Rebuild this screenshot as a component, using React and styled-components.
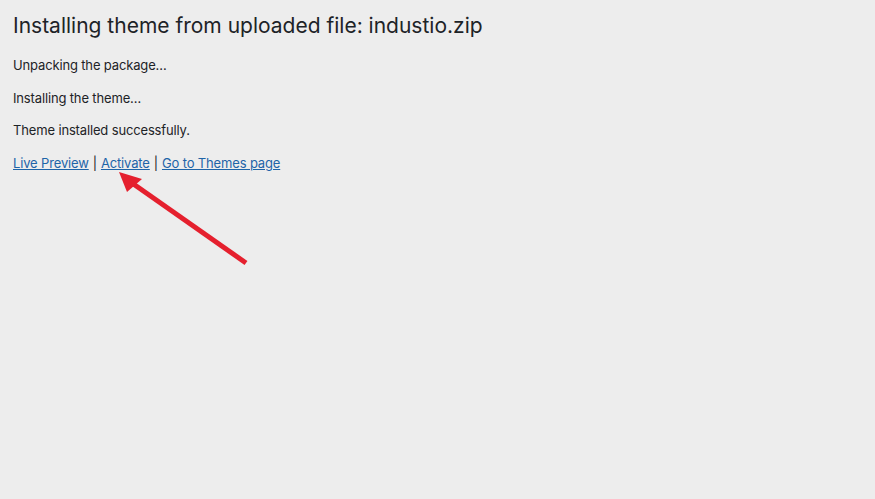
import React from "react";
import styled, { createGlobalStyle } from "styled-components";

const Global = createGlobalStyle`
  html, body { margin: 0; padding: 0; background: #ededed; }
  body {
    font-family: Inter, "Noto Sans", "Liberation Sans", sans-serif;
    color: #1d2327;
    width: 875px;
    height: 499px;
    overflow: hidden;
  }
`;

const Page = styled.div`
  position: relative;
  width: 875px;
  height: 499px;
  padding: 0 13px;
  box-sizing: border-box;
`;

const Title = styled.h1`
  font-size: 21px;
  font-weight: 400;
  line-height: 1.3;
  margin: 0;
  padding: 12px 0 4px;
  color: #1d2327;
`;

const Para = styled.p`
  font-size: 13px;
  line-height: 19.5px;
  letter-spacing: -0.15px;
  margin: 13px 0;
`;

const Link = styled.a`
  color: #1e64a8;
  text-decoration: underline;
  cursor: pointer;
`;

const Sep = styled.span`
  margin: 0 4px;
  color: #1d2327;
`;

const Arrow = styled.svg`
  position: absolute;
  left: 0;
  top: 0;
  pointer-events: none;
`;

export default function App() {
  return (
    <>
      <Global />
      <Page>
        <Title>Installing theme from uploaded file: industio.zip</Title>
        <Para>Unpacking the package…</Para>
        <Para>Installing the theme…</Para>
        <Para>Theme installed successfully.</Para>
        <Para>
          <Link>Live Preview</Link>
          <Sep>|</Sep>
          <Link>Activate</Link>
          <Sep>|</Sep>
          <Link>Go to Themes page</Link>
        </Para>
        <Arrow width="875" height="499" viewBox="0 0 875 499">
          <line x1="246" y1="263" x2="132" y2="183" stroke="#e5202e" strokeWidth="5" />
          <polygon points="119,172 142,179 127,192" fill="#e5202e" />
        </Arrow>
      </Page>
    </>
  );
}
